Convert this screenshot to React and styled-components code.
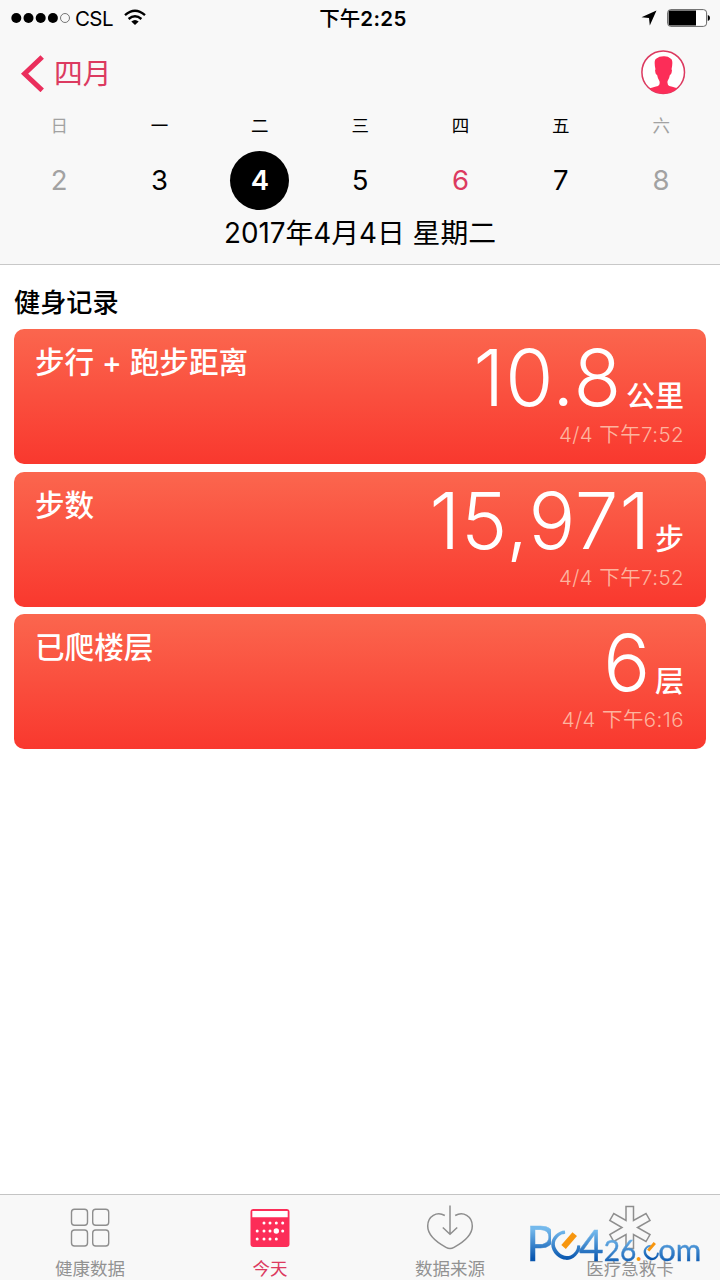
import React from 'react';
import styled, { createGlobalStyle } from 'styled-components';

const GlobalStyle = createGlobalStyle`
  * {
    box-sizing: border-box;
  }
  body {
    margin: 0;
    background: #fff;
    font-family: Inter, 'Noto Sans CJK SC', sans-serif;
    color: #000;
  }
`;

const Screen = styled.div`
  width: 720px;
  height: 1280px;
  display: flex;
  flex-direction: column;
  overflow: hidden;
`;

const Header = styled.header`
  height: 265px;
  flex: none;
  background: #f8f8f8;
  border-bottom: 1px solid #c8c8c8;
`;

const StatusBar = styled.div`
  height: 38px;
  display: grid;
  grid-template-columns: 1fr auto 1fr;
  align-items: center;
  padding: 0 10px 0 11px;
  line-height: 36px;
`;

const Carrier = styled.div`
  display: flex;
  align-items: center;
  font-size: 20.5px;
  svg {
    display: block;
    margin-bottom: 3px;
  }
  span {
    margin: 0 11px 0 5px;
    letter-spacing: -0.6px;
  }
`;

const Clock = styled.div`
  font-size: 20.5px;
  font-weight: 600;
  letter-spacing: 0.4px;
  padding-left: 5px;
  span {
    font-weight: 500;
    letter-spacing: 0;
  }
`;

const Indicators = styled.div`
  display: flex;
  justify-content: flex-end;
  align-items: center;
  gap: 10px;
  padding-bottom: 2px;
`;

const NavBar = styled.div`
  height: 70px;
  display: flex;
  align-items: center;
  justify-content: space-between;
  padding: 0 34px 1px 20px;
`;

const Back = styled.a`
  display: flex;
  align-items: center;
  gap: 10px;
  color: #dc3a60;
  font-size: 28.8px;
  line-height: 40px;
  span {
    padding-top: 3px;
  }
`;

const Week = styled.div`
  display: grid;
  grid-template-columns: repeat(7, 100.33px);
  padding-left: 9px;
`;

const Day = styled.div`
  display: flex;
  flex-direction: column;
  align-items: center;
  color: ${props => (props.$muted ? '#a2a2a2' : '#000')};
`;

const DayName = styled.div`
  height: 43px;
  line-height: 36px;
  font-size: 17.5px;
`;

const DayNumber = styled.div`
  width: 59px;
  height: 59px;
  line-height: 58px;
  border-radius: 50%;
  text-align: center;
  font-size: 27.5px;
  font-weight: ${props => (props.$selected ? 600 : 400)};
  background: ${props => (props.$selected ? '#000' : 'transparent')};
  color: ${props =>
    props.$selected ? '#fff' : props.$today ? '#dc3a60' : 'inherit'};
`;

const FullDate = styled.div`
  height: 44px;
  line-height: 47px;
  text-align: center;
  font-size: 27.8px;
`;

const Records = styled.main`
  flex: 1;
  padding: 18px 14px 0;
`;

const SectionTitle = styled.h2`
  margin: 0;
  height: 46px;
  line-height: 40px;
  font-size: 26.2px;
  font-weight: 500;
`;

const Card = styled.section`
  height: 135px;
  margin-bottom: 7.6px;
  padding: 0 22px 0 21px;
  display: flex;
  justify-content: space-between;
  border-radius: 10px;
  background: linear-gradient(#fb664e, #f9382e);
  color: #fff;
`;

const CardTitle = styled.div`
  padding-top: 13px;
  font-size: 29.6px;
  font-weight: 500;
  line-height: 40px;
`;

const Reading = styled.div`
  display: flex;
  flex-direction: column;
  align-items: flex-end;
`;

const Amount = styled.div`
  height: 92px;
  display: flex;
  align-items: baseline;
  line-height: 98px;
  font-size: 78px;
  font-weight: 270;
  letter-spacing: 0.9px;
`;

const Unit = styled.span`
  position: relative;
  top: 1px;
  margin-left: 4px;
  font-size: 29px;
  font-weight: 500;
  letter-spacing: 0;
`;

const Stamp = styled.div`
  color: #fdb49f;
  font-size: 20.5px;
  line-height: 28px;
  letter-spacing: 0.4px;
  font-weight: 350;
`;

const TabBar = styled.nav`
  height: 86px;
  flex: none;
  position: relative;
  display: grid;
  grid-template-columns: repeat(4, 1fr);
  background: #f8f8f8;
  border-top: 1px solid #c4c4c4;
`;

const Tab = styled.div`
  display: flex;
  flex-direction: column;
  align-items: center;
  padding-top: 10px;
  color: ${props => (props.$active ? '#dc3a60' : '#929292')};
  font-size: 17.5px;
  line-height: 26px;
  svg {
    display: block;
    margin-bottom: 9px;
  }
`;

// Site mark, floats above the last tab
const Mark = styled.div`
  position: absolute;
  left: 526px;
  top: 20px;
  display: flex;
  align-items: baseline;
  font-family: Lato, sans-serif;
  line-height: 56px;
`;

const MarkText = styled.span`
  font-size: ${props => props.$size}px;
  letter-spacing: ${props => props.$spacing || 0}px;
  background: linear-gradient(#74b9ec 25%, #0755ae 78%);
  background-clip: text;
  color: transparent;
  -webkit-text-stroke: 0.4px transparent;
`;

// A letter turned so that its opening faces up and right, with a bar in it
const MarkRing = styled.span`
  position: relative;
  width: ${props => props.$width}px;
  display: flex;
  justify-content: center;
  font-size: ${props => props.$size}px;
  line-height: 1;
  span {
    padding: 0 4px;
    transform: rotate(-45deg);
    transform-origin: 50% ${props => props.$middle}%;
    background: linear-gradient(225deg, #74b9ec 20%, #0755ae 75%);
    background-clip: text;
    color: transparent;
  }
  &::after {
    content: '';
    position: absolute;
    left: 54%;
    top: ${props => props.$middle - 38}%;
    width: ${props => props.$bar}px;
    height: ${props => props.$bar * 2.9}px;
    background: #f7960f;
    transform: rotate(41deg);
  }
`;

const MarkDot = styled.span`
  color: #f7960f;
  font-size: 30px;
  width: 5px;
  text-indent: -1px;
`;

const SignalDots = () => (
  <svg width="59" height="12" viewBox="0 0 59 12">
    {[5.3, 17.5, 29.7, 41.9].map(x => (
      <circle key={x} cx={x} cy="6" r="5" />
    ))}
    <circle cx="54" cy="6" r="4.5" fill="none" stroke="#555" strokeWidth="0.8" />
  </svg>
);

const Wifi = () => (
  <svg width="22" height="17" viewBox="0 0 22 17" fill="none" stroke="#000" strokeWidth="2.4">
    <path d="M1 6.2Q11-2.6 21 6.2" />
    <path d="M4.6 10Q11 4.4 17.4 10" />
    <path d="M11 16L7.3 12.4Q11 9.4 14.7 12.4Z" fill="#000" stroke="none" />
  </svg>
);

const LocationArrow = () => (
  <svg width="16" height="16" viewBox="0 0 16 16">
    <path d="M15.500 0.500L8.800 15.500L8 8L0.500 7.200Z" />
  </svg>
);

const Battery = () => (
  <svg width="43" height="18" viewBox="0 0 43 18">
    <rect x="0.6" y="0.6" width="39" height="16.8" rx="3.2" fill="#fff" stroke="#666" />
    <path d="M3 1.6H29V16.4H3Q1.6 16.4 1.6 15V3Q1.6 1.6 3 1.6Z" />
    <path d="M40.8 6Q43 6.600 43 9T40.800 12Z" />
  </svg>
);

const Chevron = () => (
  <svg width="24" height="38" viewBox="0 0 24 38" fill="none" stroke="#ea2e5c" strokeWidth="5">
    <path d="M22.2 3L4.6 19.7L22.2 36.4" />
  </svg>
);

const Avatar = () => (
  <svg width="45" height="45" viewBox="0 0 45 45">
    <circle cx="22.2" cy="22.2" r="21.3" fill="#fff" stroke="#dc3a60" strokeWidth="1.5" />
    <path
      fill="#fc2d58"
      d="M8.500 38.300Q10.500 37.500 17 35.900Q19.400 34.500 18.400 31Q16.700 28.500 16.100 25Q14.400 24.500 14.100 20.500Q13.900 19.500 14.500 19.400Q12.400 10 15.500 8.600Q18 6.300 22.500 6.300Q27 6 29.500 8.600Q32.600 10 30.500 19.400Q31.200 19.500 30.900 20.700Q30.500 24.500 28.900 25Q28.300 28.500 26.600 31Q25.900 34.500 28.300 35.900Q35 37.500 36.500 38.300A21 21 0 0 1 8.500 38.300Z"
    />
  </svg>
);

const GridIcon = () => (
  <svg width="40" height="42" viewBox="0 0 40 42" fill="none" stroke="#8e8e8e" strokeWidth="1.4">
    <rect x="1.5" y="4.3" width="16" height="16" rx="3" />
    <rect x="22.7" y="4.3" width="16" height="16" rx="3" />
    <rect x="1.5" y="25" width="16" height="16" rx="3" />
    <rect x="22.7" y="25" width="16" height="16" rx="3" />
  </svg>
);

const calendarDots = [
  [14, 18], [20, 18], [26.3, 18], [32.7, 18],
  [7.2, 26], [14, 26], [20, 26], [32.7, 26],
  [7.2, 34], [14, 34], [20, 34], [26.3, 34]
];

const CalendarIcon = () => (
  <svg width="40" height="42" viewBox="0 0 40 42">
    <rect x="0.5" y="4" width="39" height="38" rx="3" fill="#fc2d58" />
    <path d="M2.300 6H37.700V12.300H2.300Z" fill="#fff" />
    {calendarDots.map(([x, y]) => (
      <circle key={`${x}-${y}`} cx={x} cy={y} r="1.5" fill="#fff" />
    ))}
    <circle cx="26.3" cy="26" r="2.7" fill="#fff" />
  </svg>
);

const HeartIcon = () => (
  <svg width="48" height="42" viewBox="0 0 48 42" overflow="visible" fill="none" stroke="#8e8e8e" strokeWidth="1.5">
    <path d="M18.800 10.500C11 6 1.700 11 1.700 21C1.700 31 12 38 20 42.300Q24 44.500 28 42.300C36 38 46.300 31 46.300 21C46.300 11 37 6 29.200 10.500" />
    <path d="M24 0.500V29.500M16.800 22.500L24 29.300L31.200 22.500" />
  </svg>
);

const StarIcon = () => (
  <svg width="44" height="42" viewBox="0 0 44 42" overflow="visible" fill="none" stroke="#8e8e8e" strokeWidth="1.5">
    <path d="M18 1.500H25.500V15.500L38 8.500L42 15.500L29.500 22.500L42 29.500L38 36.500L25.500 29.500V43.500H18V29.500L5.800 36.500L1.800 29.500L14 22.500L1.800 15.500L5.800 8.500L18 15.500Z" />
  </svg>
);

const days = [
  { name: '日', number: 2, muted: true },
  { name: '一', number: 3 },
  { name: '二', number: 4, selected: true },
  { name: '三', number: 5 },
  { name: '四', number: 6, today: true },
  { name: '五', number: 7 },
  { name: '六', number: 8, muted: true }
];

const records = [
  { title: '步行 + 跑步距离', amount: '10.8', unit: '公里', time: '4/4 下午7:52' },
  { title: '步数', amount: '15,971', unit: '步', time: '4/4 下午7:52' },
  { title: '已爬楼层', amount: '6', unit: '层', time: '4/4 下午6:16' }
];

const tabs = [
  { label: '健康数据', icon: <GridIcon /> },
  { label: '今天', icon: <CalendarIcon />, active: true },
  { label: '数据来源', icon: <HeartIcon /> },
  { label: '医疗急救卡', icon: <StarIcon /> }
];

export default () => (
  <Screen>
    <GlobalStyle />
    <Header>
      <StatusBar>
        <Carrier>
          <SignalDots />
          <span>CSL</span>
          <Wifi />
        </Carrier>
        <Clock>
          <span>下午</span>2:25
        </Clock>
        <Indicators>
          <LocationArrow />
          <Battery />
        </Indicators>
      </StatusBar>
      <NavBar>
        <Back>
          <Chevron />
          <span>四月</span>
        </Back>
        <Avatar />
      </NavBar>
      <Week>
        {days.map(day => (
          <Day key={day.number} $muted={day.muted}>
            <DayName>{day.name}</DayName>
            <DayNumber $selected={day.selected} $today={day.today}>
              {day.number}
            </DayNumber>
          </Day>
        ))}
      </Week>
      <FullDate>2017年4月4日 星期二</FullDate>
    </Header>
    <Records>
      <SectionTitle>健身记录</SectionTitle>
      {records.map(record => (
        <Card key={record.title}>
          <CardTitle>{record.title}</CardTitle>
          <Reading>
            <Amount>
              {record.amount}
              <Unit>{record.unit}</Unit>
            </Amount>
            <Stamp>{record.time}</Stamp>
          </Reading>
        </Card>
      ))}
    </Records>
    <TabBar>
      {tabs.map(tab => (
        <Tab key={tab.label} $active={tab.active}>
          {tab.icon}
          {tab.label}
        </Tab>
      ))}
      <Mark>
        <MarkText $size={48} $spacing={-4}>P</MarkText>
        <MarkRing $size={40} $width={28} $middle={53} $bar={6}>
          <span>C</span>
        </MarkRing>
        <MarkText $size={43}>4</MarkText>
        <MarkText $size={28}>26</MarkText>
        <MarkDot>.</MarkDot>
        <MarkRing $size={30} $width={17} $middle={63} $bar={3.4}>
          <span>c</span>
        </MarkRing>
        <MarkText $size={31}>om</MarkText>
      </Mark>
    </TabBar>
  </Screen>
);
